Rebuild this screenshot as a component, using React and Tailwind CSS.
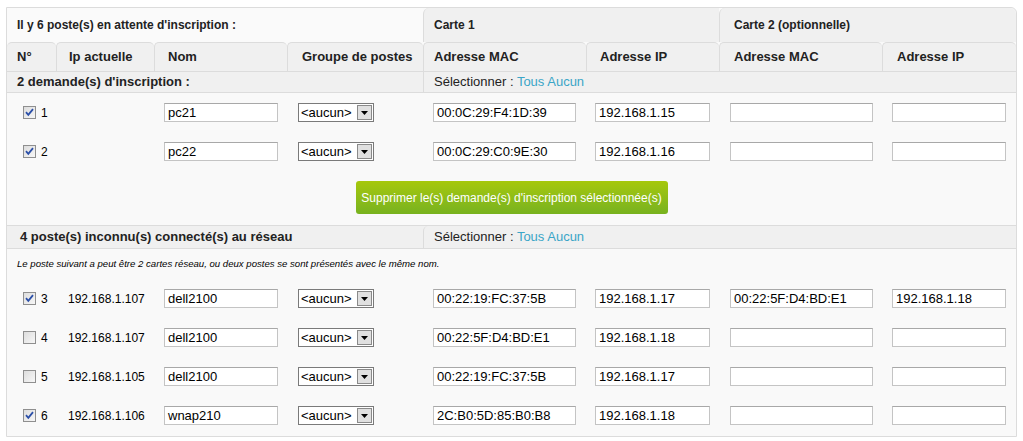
import React from 'react';

const COLS = 'grid grid-cols-[49px_98px_133px_136px_163px_133px_163px_134px]';

const pending = [
    { n: 1, name: 'pc21', mac: '00:0C:29:F4:1D:39', ip: '192.168.1.15' },
    { n: 2, name: 'pc22', mac: '00:0C:29:C0:9E:30', ip: '192.168.1.16' },
];

const unknown = [
    { n: 3, checked: true, cur: '192.168.1.107', name: 'dell2100', mac: '00:22:19:FC:37:5B', ip: '192.168.1.17', mac2: '00:22:5F:D4:BD:E1', ip2: '192.168.1.18' },
    { n: 4, checked: false, cur: '192.168.1.107', name: 'dell2100', mac: '00:22:5F:D4:BD:E1', ip: '192.168.1.18', mac2: '', ip2: '' },
    { n: 5, checked: false, cur: '192.168.1.105', name: 'dell2100', mac: '00:22:19:FC:37:5B', ip: '192.168.1.17', mac2: '', ip2: '' },
    { n: 6, checked: true, cur: '192.168.1.106', name: 'wnap210', mac: '2C:B0:5D:85:B0:B8', ip: '192.168.1.18', mac2: '', ip2: '' },
];

const Checkbox = ({ checked }) => (
    <svg width="13" height="13" viewBox="0 0 13 13" className="shrink-0">
        <defs>
            <linearGradient id="cbg" x1="0" y1="0" x2="1" y2="1">
                <stop offset="0" stopColor="#dcdcdc" />
                <stop offset="1" stopColor="#f8f8f8" />
            </linearGradient>
        </defs>
        <rect x="0.5" y="0.5" width="12" height="12" fill="url(#cbg)" stroke="#8f8f8f" />
        {checked && (
            <path d="M3 6.2 L5.3 8.8 L10 3.2" fill="none" stroke="#2b4fa8" strokeWidth="1.8" />
        )}
    </svg>
);

const TextBox = ({ value, w }) => (
    <div className={`${w} h-[19px] bg-white border border-[#c4c4c4] border-t-[#a8a8a8] pl-[3px] flex items-center text-[13px] text-black leading-none overflow-hidden whitespace-nowrap`}>
        {value}
    </div>
);

const Select = () => (
    <div className="w-[76px] h-[19px] bg-white border border-[#7a7a7a] flex items-center">
        <span className="flex-1 pl-[2px] text-[13px] leading-none text-black">&lt;aucun&gt;</span>
        <span className="w-[15px] h-[15px] mr-[1px] bg-[#e0e0e0] border border-[#8a8a8a] flex items-center justify-center">
            <svg width="7" height="4" viewBox="0 0 7 4"><path d="M0 0h7L3.5 4z" fill="#000" /></svg>
        </span>
    </div>
);

const Row = ({ r, checked, cur }) => (
    <div className={`${COLS} h-[39px] items-center text-[12px] text-black`}>
        <div className="flex items-center pl-[16px] gap-[5px]">
            <Checkbox checked={checked} />
            <span>{r.n}</span>
        </div>
        <div className="pl-[12px]">{cur}</div>
        <div className="pl-[10px]"><TextBox value={r.name} w="w-[114px]" /></div>
        <div className="pl-[11px]"><Select /></div>
        <div className="pl-[10px]"><TextBox value={r.mac} w="w-[143px]" /></div>
        <div className="pl-[9px]"><TextBox value={r.ip} w="w-[115px]" /></div>
        <div className="pl-[11px]"><TextBox value={r.mac2 || ''} w="w-[143px]" /></div>
        <div className="pl-[10px]"><TextBox value={r.ip2 || ''} w="w-[114px]" /></div>
    </div>
);

const Selectionner = () => (
    <span className="text-[13px] font-normal text-[#222]">
        Sélectionner : <span className="text-[#3aa5c7]">Tous Aucun</span>
    </span>
);

export default function App() {
    const headers = ['N°', 'Ip actuelle', 'Nom', 'Groupe de postes', 'Adresse MAC', 'Adresse IP', 'Adresse MAC', 'Adresse IP'];
    const pads = ['pl-[10px]', 'pl-[12px]', 'pl-[13px]', 'pl-[14px]', 'pl-[10px]', 'pl-[13px]', 'pl-[14px]', 'pl-[14px]'];

    return (
        <div className="w-[1023px] h-[441px] bg-white pt-[7px] pl-[6px] font-['Liberation_Sans',Arial,sans-serif]">
            <div className="w-[1011px] border border-[#dcdcdc] rounded-tr-[6px] bg-[#f9f9f9] pb-[1px]">
                {/* Header row 1 */}
                <div className={`${COLS} h-[34px] items-stretch text-[12px] font-bold text-[#222]`}>
                    <div className="col-span-4 bg-[#fafafa] flex items-center pl-[10px]">
                        Il y 6 poste(s) en attente d'inscription :
                    </div>
                    <div className="col-span-2 bg-[#f0f0f0] border-l border-[#dcdcdc] rounded-tl-[6px] flex items-center pl-[10px]">
                        Carte 1
                    </div>
                    <div className="col-span-2 bg-[#f0f0f0] border-l border-[#dcdcdc] rounded-t-[6px] flex items-center pl-[14px]">
                        Carte 2 (optionnelle)
                    </div>
                </div>

                {/* Header row 2 */}
                <div className={`${COLS} h-[29px] text-[13px] font-bold text-[#222]`}>
                    {headers.map((h, i) => (
                        <div
                            key={i}
                            className={`bg-[#f0f0f0] border-t border-[#dcdcdc] rounded-t-[5px] flex items-center ${pads[i]} ${i > 0 ? 'border-l' : ''}`}
                        >
                            {h}
                        </div>
                    ))}
                </div>

                {/* Section 1 header */}
                <div className={`${COLS} h-[22px] border-y border-[#dcdcdc] bg-[#f0f0f0]`}>
                    <div className="col-span-4 flex items-center pl-[10px] text-[13px] font-bold text-[#222]">
                        2 demande(s) d'inscription :
                    </div>
                    <div className="col-span-4 border-l border-[#dcdcdc] flex items-center pl-[10px]">
                        <Selectionner />
                    </div>
                </div>

                {pending.map(r => (
                    <Row key={r.n} r={r} checked cur="" />
                ))}

                <div className="flex justify-center pt-[10px] pb-[11px]">
                    <button className="h-[33px] w-[312px] rounded-[3px] bg-gradient-to-b from-[#a6c80a] to-[#77b21f] text-white text-[12px]">
                        Supprimer le(s) demande(s) d'inscription sélectionnée(s)
                    </button>
                </div>

                {/* Section 2 header */}
                <div className={`${COLS} h-[24px] border-y border-[#dcdcdc] bg-[#f0f0f0]`}>
                    <div className="col-span-4 flex items-center pl-[13px] text-[13px] font-bold text-[#222] rounded-tl-[5px]">
                        4 poste(s) inconnu(s) connecté(s) au réseau
                    </div>
                    <div className="col-span-4 border-l border-[#dcdcdc] flex items-center pl-[10px] rounded-tl-[5px]">
                        <Selectionner />
                    </div>
                </div>

                <div className="h-[30px] flex items-center pl-[10px] text-[9.6px] italic text-black">
                    Le poste suivant a peut être 2 cartes réseau, ou deux postes se sont présentés avec le même nom.
                </div>

                {unknown.map(r => (
                    <Row key={r.n} r={r} checked={r.checked} cur={r.cur} />
                ))}
            </div>
        </div>
    );
}
